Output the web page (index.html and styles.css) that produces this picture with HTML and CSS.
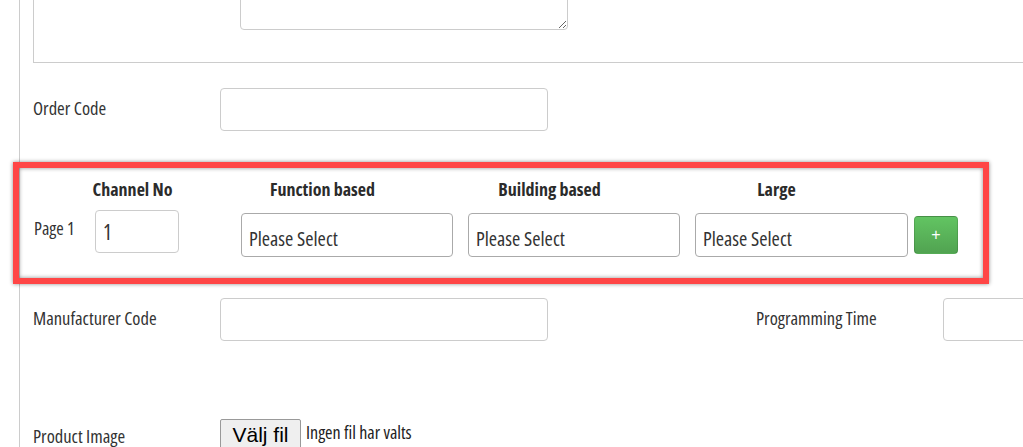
FILE: index.html
```html
<!DOCTYPE html>
<html>
<head>
<meta charset="utf-8">
<link rel="stylesheet" href="styles.css">
</head>
<body>
<div class="frame">
<div class="page">
  <div class="fieldset">
    <textarea class="notes"></textarea>
  </div>

  <div class="row row-order">
    <label class="label">Order Code</label>
    <input class="field" type="text">
  </div>

  <div class="highlight">
    <div class="heads">
      <div class="head head-channel">Channel No</div>
      <div class="head head-function">Function based</div>
      <div class="head">Building based</div>
      <div class="head">Large</div>
    </div>
    <div class="page-row">
      <span class="page-label">Page 1</span>
      <input class="channel" type="text" value="1">
      <div class="select">Please Select</div>
      <div class="select">Please Select</div>
      <div class="select select-last">Please Select</div>
      <button class="add">+</button>
    </div>
  </div>

  <div class="row row-manu">
    <div class="pair">
      <label class="label">Manufacturer Code</label>
      <input class="field" type="text">
    </div>
    <div class="pair pair-right">
      <label class="label">Programming Time</label>
      <input class="field" type="text">
    </div>
  </div>

  <div class="row row-image">
    <label class="label">Product Image</label>
    <button class="file-btn">Välj fil</button>
    <span class="file-none">Ingen fil har valts</span>
  </div>
</div>
</div>
</body>
</html>
```
FILE: styles.css
```css
html, body {
  margin: 0;
  padding: 0;
  background: #fff;
  overflow: hidden;
}
body {
  font-family: "Open Sans", "Liberation Sans", sans-serif;
  font-stretch: 75%;
  font-size: 18px;
  color: #333;
}
.frame {
  width: 1023px;
  height: 447px;
  overflow: hidden;
}
.page {
  margin-left: 19px;
  border-left: 1px solid #ccc;
  padding-left: 13px;
  height: 480px;
}
.fieldset {
  margin-top: -31px;
  margin-right: -2px;
  border: 1px solid #ccc;
  border-top: none;
  padding: 0 0 32px 206px;
  height: 61px;
  box-sizing: content-box;
}
.notes {
  display: block;
  width: 328px;
  height: 61px;
  box-sizing: border-box;
  border: 1px solid #ccc;
  border-radius: 4px;
  margin: 0;
  resize: both;
}
.row {
  display: flex;
  align-items: center;
}
.label {
  width: 187px;
  flex: none;
  line-height: 20px;
  font-size: 18.5px;
}
.field {
  width: 328px;
  height: 43px;
  flex: none;
  box-sizing: border-box;
  border: 1px solid #ccc;
  border-radius: 4px;
  margin: 0;
  padding: 0 8px;
  font: inherit;
}
.row-order {
  margin-top: 25px;
}
.row-order .label {
  margin-top: -4px;
}
.highlight {
  margin-top: 31px;
  margin-left: -20px;
  width: 976px;
  height: 122px;
  box-sizing: border-box;
  border: 6px solid #ff4646;
  box-shadow: 0 0 4px rgba(0, 0, 0, 0.45), inset 0 0 4px rgba(0, 0, 0, 0.45);
}
.heads {
  display: flex;
  padding-left: 66px;
  padding-top: 9px;
  height: 24px;
  line-height: 24px;
}
.head {
  width: 227px;
  text-align: center;
  font-weight: 700;
  color: #2b2b2b;
}
.head-channel {
  width: 95px;
}
.head-function {
  margin-left: 29px;
}
.page-row {
  display: flex;
  align-items: flex-start;
  margin-top: 9px;
  padding-left: 15px;
}
.page-label {
  width: 61px;
  margin-top: 8px;
  line-height: 20px;
}
.channel {
  width: 84px;
  height: 43px;
  box-sizing: border-box;
  border: 1px solid #ccc;
  border-radius: 4px;
  margin: 0 62px 0 0;
  padding: 0 7px;
  font: inherit;
  font-size: 21px;
  color: #333;
}
.select {
  width: 212px;
  height: 44px;
  box-sizing: border-box;
  border: 1px solid #aaa;
  border-radius: 4px;
  margin-top: 3px;
  margin-right: 15px;
  padding: 12px 0 0 7px;
  line-height: 26px;
  font-size: 20px;
}
.select-last {
  width: 213px;
  margin-right: 6px;
}
.add {
  width: 44px;
  height: 38px;
  margin-top: 6px;
  border: 1px solid rgba(0, 0, 0, 0.12);
  border-radius: 4px;
  background: linear-gradient(#62c462, #51a351);
  color: #fff;
  font-family: "Liberation Sans", sans-serif;
  font-size: 16px;
  padding: 0;
}
.row-manu {
  margin-top: 14px;
}
.row-manu .label {
  margin-top: -4px;
}
.pair {
  display: flex;
  align-items: center;
  width: 723px;
  flex: none;
}
.row-image {
  margin-top: 78px;
  align-items: flex-start;
}
.file-btn {
  height: 32px;
  width: 81px;
  flex: none;
  margin: 0;
  padding: 0;
  border: 1px solid #999;
  border-radius: 2px;
  background: #efefef;
  font-family: "Liberation Sans", sans-serif;
  font-size: 21px;
  color: #000;
}
.row-image .label {
  margin-top: 7px;
}
.file-none {
  margin-left: 5px;
  margin-top: 3px;
  line-height: 20px;
  color: #222;
}
```
